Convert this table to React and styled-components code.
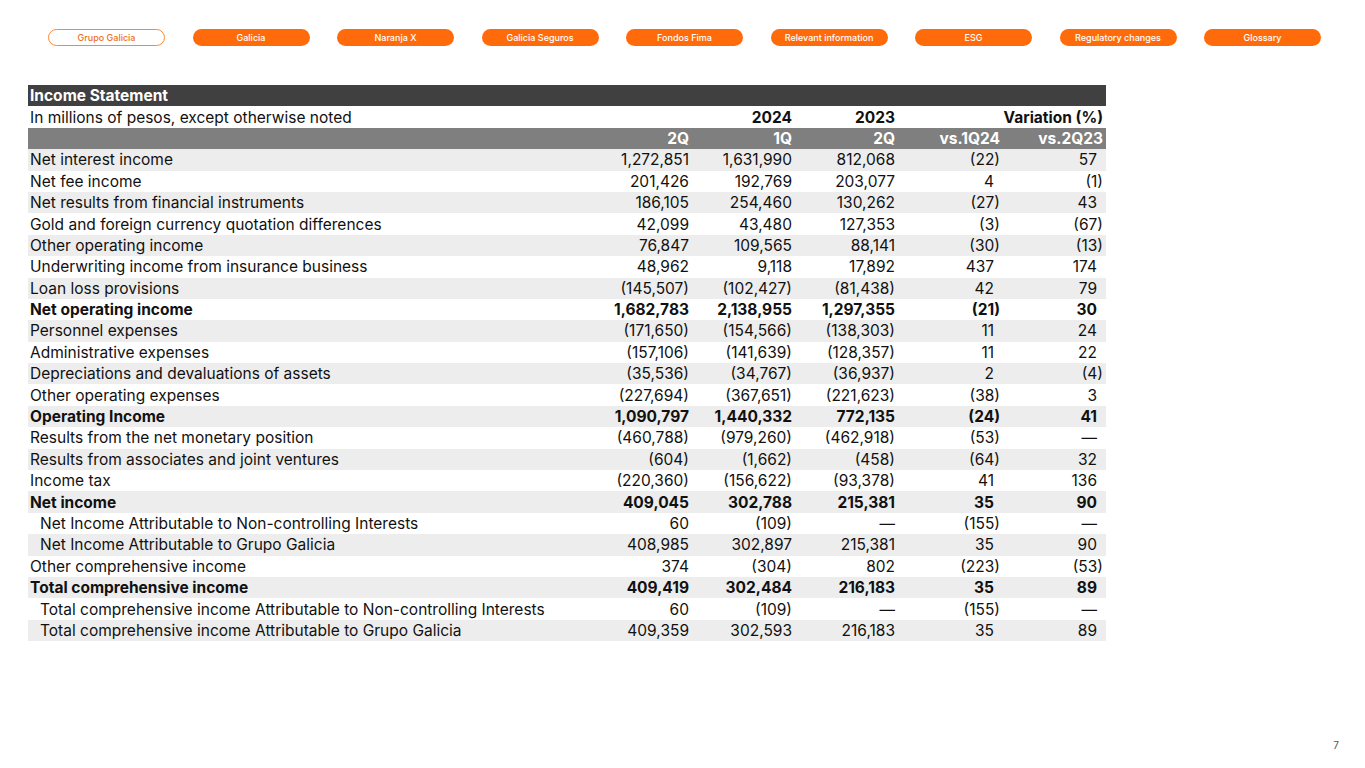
import styled, { createGlobalStyle } from "styled-components";

const GlobalStyle = createGlobalStyle`
  html, body {
    margin: 0;
    padding: 0;
    background: #fff;
  }
  body {
    font-family: Inter, "Noto Sans", "Liberation Sans", sans-serif;
    color: #111;
  }
`;

const tabs = [
  "Grupo Galicia",
  "Galicia",
  "Naranja X",
  "Galicia Seguros",
  "Fondos Fima",
  "Relevant information",
  "ESG",
  "Regulatory changes",
  "Glossary",
];

const rows = [
  ["Net interest income", "1,272,851", "1,631,990", "812,068", "(22)", "57"],
  ["Net fee income", "201,426", "192,769", "203,077", "4", "(1)"],
  ["Net results from financial instruments", "186,105", "254,460", "130,262", "(27)", "43"],
  ["Gold and foreign currency quotation differences", "42,099", "43,480", "127,353", "(3)", "(67)"],
  ["Other operating income", "76,847", "109,565", "88,141", "(30)", "(13)"],
  ["Underwriting income from insurance business", "48,962", "9,118", "17,892", "437", "174"],
  ["Loan loss provisions", "(145,507)", "(102,427)", "(81,438)", "42", "79"],
  ["Net operating income", "1,682,783", "2,138,955", "1,297,355", "(21)", "30", "bold"],
  ["Personnel expenses", "(171,650)", "(154,566)", "(138,303)", "11", "24"],
  ["Administrative expenses", "(157,106)", "(141,639)", "(128,357)", "11", "22"],
  ["Depreciations and devaluations of assets", "(35,536)", "(34,767)", "(36,937)", "2", "(4)"],
  ["Other operating expenses", "(227,694)", "(367,651)", "(221,623)", "(38)", "3"],
  ["Operating Income", "1,090,797", "1,440,332", "772,135", "(24)", "41", "bold"],
  ["Results from the net monetary position", "(460,788)", "(979,260)", "(462,918)", "(53)", "—"],
  ["Results from associates and joint ventures", "(604)", "(1,662)", "(458)", "(64)", "32"],
  ["Income tax", "(220,360)", "(156,622)", "(93,378)", "41", "136"],
  ["Net income", "409,045", "302,788", "215,381", "35", "90", "bold"],
  ["Net Income Attributable to Non-controlling Interests", "60", "(109)", "—", "(155)", "—", "indent"],
  ["Net Income Attributable to Grupo Galicia", "408,985", "302,897", "215,381", "35", "90", "indent"],
  ["Other comprehensive income", "374", "(304)", "802", "(223)", "(53)"],
  ["Total comprehensive income", "409,419", "302,484", "216,183", "35", "89", "bold"],
  ["Total comprehensive income Attributable to Non-controlling Interests", "60", "(109)", "—", "(155)", "—", "indent"],
  ["Total comprehensive income Attributable to Grupo Galicia", "409,359", "302,593", "216,183", "35", "89", "indent"],
];

export default function App() {
  return (
    <Page>
      <GlobalStyle />
      <Nav>
        {tabs.map((t, i) => (
          <Pill key={t} $active={i === 0}>
            {t}
          </Pill>
        ))}
      </Nav>

      <Table>
        <TitleRow>Income Statement</TitleRow>

        <Row>
          <Label>In millions of pesos, except otherwise noted</Label>
          <Cell />
          <Cell $bold>2024</Cell>
          <Cell $bold>2023</Cell>
          <SpanCell $bold>Variation (%)</SpanCell>
        </Row>

        <HeadRow>
          <Label />
          <Cell>2Q</Cell>
          <Cell>1Q</Cell>
          <Cell>2Q</Cell>
          <VarCell $paren>vs.1Q24</VarCell>
          <VarCell $paren>vs.2Q23</VarCell>
        </HeadRow>

        {rows.map((r, i) => {
          const bold = r[6] === "bold";
          const indent = r[6] === "indent";
          return (
            <Row key={r[0]} $band={i % 2 === 0}>
              <Label $bold={bold} $indent={indent}>
                {r[0]}
              </Label>
              <Cell $bold={bold}>{r[1]}</Cell>
              <Cell $bold={bold}>{r[2]}</Cell>
              <Cell $bold={bold}>{r[3]}</Cell>
              <VarCell $bold={bold} $paren={r[4].endsWith(")")}>
                {r[4]}
              </VarCell>
              <VarCell $bold={bold} $paren={r[5].endsWith(")")}>
                {r[5]}
              </VarCell>
            </Row>
          );
        })}
      </Table>

      <Footer>7</Footer>
    </Page>
  );
}

const Page = styled.div`
  width: 1365px;
  height: 768px;
  display: flex;
  flex-direction: column;
  box-sizing: border-box;
`;

const Nav = styled.nav`
  display: flex;
  gap: 27.5px;
  padding: 29px 0 0 48px;
`;

const Pill = styled.div`
  width: 117px;
  height: 17px;
  box-sizing: border-box;
  border-radius: 9px;
  display: flex;
  align-items: center;
  justify-content: center;
  font-size: 9px;
  font-weight: 500;
  background: ${(p) => (p.$active ? "#fff" : "#ff6b0a")};
  color: ${(p) => (p.$active ? "#f07022" : "#fff")};
  border: ${(p) => (p.$active ? "1.5px solid #f58a3c" : "none")};
`;

const Table = styled.div`
  margin: 39px 0 0 28px;
  width: 1078px;
  display: grid;
  grid-template-columns: 558px 103px 103px 103px 105px 103px 3px;
  grid-auto-rows: 21.4px;
  font-size: 15.5px;
`;

const TitleRow = styled.div`
  grid-column: 1 / -1;
  background: #404040;
  color: #fff;
  font-weight: 700;
  display: flex;
  align-items: center;
  padding-left: 2px;
`;

const Row = styled.div`
  grid-column: 1 / -1;
  display: grid;
  grid-template-columns: subgrid;
  align-items: center;
  background: ${(p) => (p.$band ? "#ededed" : "transparent")};
`;

const HeadRow = styled(Row)`
  background: #7f7f7f;
  color: #fff;
  font-weight: 700;
`;

const Label = styled.div`
  padding-left: ${(p) => (p.$indent ? "12px" : "2px")};
  font-weight: ${(p) => (p.$bold ? 700 : "inherit")};
  white-space: nowrap;
`;

const Cell = styled.div`
  text-align: right;
  font-weight: ${(p) => (p.$bold ? 700 : "inherit")};
  white-space: nowrap;
`;

const VarCell = styled(Cell)`
  padding-right: ${(p) => (p.$paren ? "0" : "6px")};
`;

const SpanCell = styled(Cell)`
  grid-column: span 2;
`;

const Footer = styled.div`
  margin-top: auto;
  padding: 0 26px 17px 0;
  text-align: right;
  font-size: 10px;
  color: #555;
`;
